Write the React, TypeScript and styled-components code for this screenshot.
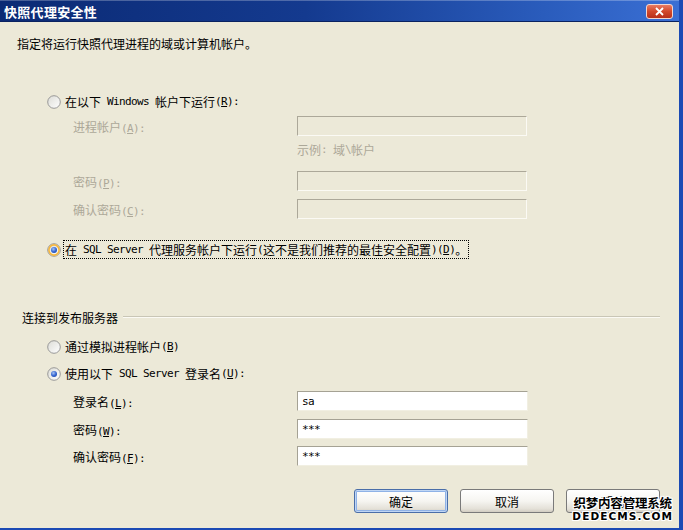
import React, { useId } from "react";
import styled, { createGlobalStyle } from "styled-components";

const GlobalStyle = createGlobalStyle`
  html, body {
    margin: 0;
    padding: 0;
    background: #ece9d8;
  }
  body {
    font-family: "Noto Sans CJK SC", "Noto Sans", sans-serif;
    font-size: 12px;
    color: #000;
  }
`;

const Window = styled.div`
  position: relative;
  width: 683px;
  height: 530px;
  box-sizing: border-box;
  display: flex;
  flex-direction: column;
  background: #ece9d8;
  border-right: 4px solid #1b4ab4;
  border-bottom: 2px solid #1b4ab4;
  overflow: hidden;
`;

const TitleBar = styled.div`
  height: 22px;
  flex: none;
  display: flex;
  align-items: center;
  justify-content: space-between;
  padding: 0 6px 0 4px;
  background: linear-gradient(90deg, #0b2a74 0%, #143a8f 45%, #2a5cbc 80%, #3a6fd4 100%);
  box-shadow: inset 0 1px 0 rgba(255, 255, 255, 0.25), inset 0 -1px 0 #0a2260;
`;

const Title = styled.span`
  color: #fff;
  font-size: 13px;
  font-weight: 700;
  letter-spacing: 0.3px;
`;

const CloseButton = styled.div`
  width: 27px;
  height: 15px;
  box-sizing: border-box;
  border: 1px solid #f2d6cf;
  border-radius: 3px;
  background: linear-gradient(180deg, #e87a62 0%, #d2482a 50%, #b8301a 100%);
  display: flex;
  align-items: center;
  justify-content: center;
`;

const Body = styled.div`
  flex: 1;
  display: flex;
  flex-direction: column;
`;

const Mono = styled.span`
  font-family: "DejaVu Sans Mono", "Liberation Mono", monospace;
  font-size: 11px;
  letter-spacing: -0.62px;
  white-space: pre;
`;

const Intro = styled.div<{ $mt: number }>`
  margin-top: ${(p) => p.$mt}px;
  padding-left: 17px;
  height: 14px;
  display: flex;
  align-items: center;
`;

const RadioRow = styled.div<{ $mt: number }>`
  margin-top: ${(p) => p.$mt}px;
  padding-left: 47px;
  height: 19px;
  display: flex;
  align-items: center;
  gap: 2px;
`;

const RadioLabel = styled.span<{ $focused?: boolean }>`
  display: inline-flex;
  align-items: center;
  height: 17px;
  padding: 0 1px;
  border: 1px dotted ${(p) => (p.$focused ? "#000" : "transparent")};
  white-space: pre;
`;

const FieldRow = styled.div<{ $mt: number }>`
  margin-top: ${(p) => p.$mt}px;
  padding-left: 73px;
  height: 20px;
  display: grid;
  grid-template-columns: 224px 231px;
  align-items: center;
`;

const FieldLabel = styled.span<{ $disabled?: boolean }>`
  color: ${(p) => (p.$disabled ? "#aca899" : "#000")};
  white-space: pre;
`;

const TextBox = styled.div<{ $disabled?: boolean }>`
  box-sizing: border-box;
  height: 20px;
  width: ${(p) => (p.$disabled ? 230 : 231)}px;
  padding: 0 4px;
  display: flex;
  align-items: center;
  background: ${(p) => (p.$disabled ? "#ece9d8" : "#fff")};
  border: 1px solid;
  border-color: ${(p) =>
    p.$disabled ? "#aca899 #fbfaf4 #fbfaf4 #aca899" : "#a5a294 #f1efe2 #f1efe2 #a5a294"};
`;

const Hint = styled.div<{ $mt: number }>`
  margin-top: ${(p) => p.$mt}px;
  padding-left: 297px;
  height: 14px;
  display: flex;
  align-items: center;
  color: #aca899;
  white-space: pre;
`;

const GroupHeader = styled.div<{ $mt: number }>`
  margin-top: ${(p) => p.$mt}px;
  padding: 0 19px 0 22px;
  height: 14px;
  display: flex;
  align-items: center;
  gap: 5px;
`;

const GroupRule = styled.div`
  flex: 1;
  height: 1px;
  background: #c9c6b6;
  border-bottom: 1px solid #fbfaf4;
`;

const ButtonBar = styled.div<{ $mt: number }>`
  margin-top: ${(p) => p.$mt}px;
  padding-right: 19px;
  display: flex;
  justify-content: flex-end;
  gap: 12px;
`;

const Button = styled.div<{ $default?: boolean }>`
  box-sizing: border-box;
  width: 94px;
  height: 24px;
  display: flex;
  align-items: center;
  justify-content: center;
  border: 1px solid #6f6f6f;
  border-radius: 3px;
  background: linear-gradient(180deg, #ffffff 0%, #f6f5f1 50%, #e4e1d8 85%, #d2cdc2 100%);
  box-shadow: ${(p) =>
    p.$default ? "inset 0 0 0 1px #c0d6f4, inset 0 0 0 2px #8fb2e6" : "none"};
  border-color: ${(p) => (p.$default ? "#4a6ea8" : "#7a7a7a")};
`;

// site watermark stamped over the bottom-right corner of the screenshot
const Watermark = styled.div`
  position: absolute;
  right: 6px;
  bottom: 7px;
  display: flex;
  flex-direction: column;
  align-items: center;
  gap: 2px;
  font-weight: 700;
  color: #000;
  text-shadow: 1px 0 0 #fff, -1px 0 0 #fff, 0 1px 0 #fff, 0 -1px 0 #fff, 1px 1px 0 #fff,
    -1px -1px 0 #fff, 1px -1px 0 #fff, -1px 1px 0 #fff;
`;

const MarkCn = styled.span`
  font-size: 12.5px;
  line-height: 13px;
  letter-spacing: -0.2px;
`;

const MarkEn = styled.span`
  font-family: "DejaVu Sans", sans-serif;
  font-size: 10.5px;
  line-height: 10px;
  letter-spacing: 1.1px;
`;

// split a label into ASCII and CJK runs; "&X" underlines the access key
function Txt({ text }: { text: string }) {
  const runs = text.match(/[\x00-\x7f]+|[^\x00-\x7f]+/g) || [];
  return (
    <>
      {runs.map((run, i) => {
        if (run.charCodeAt(0) > 127) return <span key={i}>{run}</span>;
        const out: React.ReactNode[] = [];
        let buf = "";
        for (let j = 0; j < run.length; j++) {
          if (run[j] === "&" && j + 1 < run.length) {
            if (buf) out.push(buf);
            buf = "";
            out.push(<u key={j}>{run[j + 1]}</u>);
            j++;
          } else buf += run[j];
        }
        if (buf) out.push(buf);
        return <Mono key={i}>{out}</Mono>;
      })}
    </>
  );
}

const Radio = ({ checked, hot }: { checked?: boolean; hot?: boolean }) => {
  const id = useId().replace(/:/g, "");
  return (
    <svg width="14" height="14" viewBox="0 0 14 14">
      <defs>
        <linearGradient id={`b${id}`} x1="0" y1="0" x2="1" y2="1">
          <stop offset="0" stopColor="#dcdcd6" />
          <stop offset="1" stopColor="#ffffff" />
        </linearGradient>
        <radialGradient id={`d${id}`} cx="0.4" cy="0.35" r="0.7">
          <stop offset="0" stopColor="#a8c4f2" />
          <stop offset="0.6" stopColor="#3a6ad4" />
          <stop offset="1" stopColor="#1e4ab0" />
        </radialGradient>
      </defs>
      <circle cx="7" cy="7" r="6.3" fill={`url(#b${id})`} stroke="#8e8f8f" strokeWidth="0.9" />
      {hot && <circle cx="7" cy="7" r="5.1" fill="none" stroke="#f6b73c" strokeWidth="1.6" />}
      {checked && <circle cx="7" cy="7" r="3" fill={`url(#d${id})`} />}
    </svg>
  );
};

export default function App() {
  return (
    <>
      <GlobalStyle />
      <Window>
        <TitleBar>
          <Title>快照代理安全性</Title>
          <CloseButton>
            <svg width="9" height="9" viewBox="0 0 9 9">
              <path d="M1 1 L8 8 M8 1 L1 8" stroke="#fff" strokeWidth="1.8" />
            </svg>
          </CloseButton>
        </TitleBar>
        <Body>
          <Intro $mt={14}>指定将运行快照代理进程的域或计算机帐户。</Intro>

          <RadioRow $mt={42}>
            <Radio />
            <RadioLabel>
              <Txt text="在以下 Windows 帐户下运行(&R):" />
            </RadioLabel>
          </RadioRow>
          <FieldRow $mt={5}>
            <FieldLabel $disabled>
              <Txt text="进程帐户(&A):" />
            </FieldLabel>
            <TextBox $disabled />
          </FieldRow>
          <Hint $mt={6}>
            示例<Mono>: </Mono>域<Mono>\</Mono>帐户
          </Hint>
          <FieldRow $mt={15}>
            <FieldLabel $disabled>
              <Txt text="密码(&P):" />
            </FieldLabel>
            <TextBox $disabled />
          </FieldRow>
          <FieldRow $mt={8}>
            <FieldLabel $disabled>
              <Txt text="确认密码(&C):" />
            </FieldLabel>
            <TextBox $disabled />
          </FieldRow>

          <RadioRow $mt={21}>
            <Radio checked hot />
            <RadioLabel $focused>
              <Txt text="在 SQL Server 代理服务帐户下运行(这不是我们推荐的最佳安全配置)(&D)。" />
            </RadioLabel>
          </RadioRow>

          <GroupHeader $mt={51}>
            <span>连接到发布服务器</span>
            <GroupRule />
          </GroupHeader>
          <RadioRow $mt={13}>
            <Radio />
            <RadioLabel>
              <Txt text="通过模拟进程帐户(&B)" />
            </RadioLabel>
          </RadioRow>
          <RadioRow $mt={8}>
            <Radio checked />
            <RadioLabel>
              <Txt text="使用以下 SQL Server 登录名(&U):" />
            </RadioLabel>
          </RadioRow>
          <FieldRow $mt={8}>
            <FieldLabel>
              <Txt text="登录名(&L):" />
            </FieldLabel>
            <TextBox>
              <Mono>sa</Mono>
            </TextBox>
          </FieldRow>
          <FieldRow $mt={8}>
            <FieldLabel>
              <Txt text="密码(&W):" />
            </FieldLabel>
            <TextBox>
              <Mono>***</Mono>
            </TextBox>
          </FieldRow>
          <FieldRow $mt={7}>
            <FieldLabel>
              <Txt text="确认密码(&F):" />
            </FieldLabel>
            <TextBox>
              <Mono>***</Mono>
            </TextBox>
          </FieldRow>

          <ButtonBar $mt={23}>
            <Button $default>确定</Button>
            <Button>取消</Button>
            <Button>帮助</Button>
          </ButtonBar>
        </Body>
        <Watermark>
          <MarkCn>织梦内容管理系统</MarkCn>
          <MarkEn>DEDECMS.COM</MarkEn>
        </Watermark>
      </Window>
    </>
  );
}
